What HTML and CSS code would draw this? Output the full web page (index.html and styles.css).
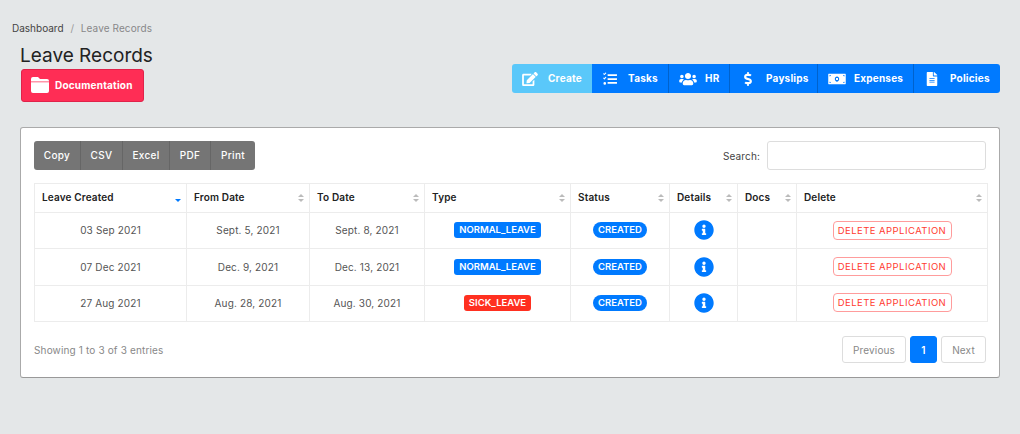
FILE: index.html
```html
<!DOCTYPE html>
<html>
  <head>
    <meta charset="utf-8" />
    <title>Leave Records</title>
    <link rel="stylesheet" href="styles.css">
  </head>
  <body>
    <nav class="crumbs">
      <a href="#">Dashboard</a>
      <span class="crumb-sep">/</span>
      <span class="crumb-here">Leave Records</span>
    </nav>

    <header class="top">
      <div class="top-left">
        <h1>Leave Records</h1>
        <a class="doc-btn" href="#">
          <svg class="doc-icon" viewBox="0 0 18 16"><path d="M2 0h5l2 2h7a2 2 0 0 1 2 2v.6H0V2a2 2 0 0 1 2-2zM0 5.3h18V14a2 2 0 0 1-2 2H2a2 2 0 0 1-2-2z"/></svg>
          Documentation
        </a>
      </div>
      <div class="nav-group">
        <a class="nav-btn nav-active nav-create" href="#">
          <svg class="nav-icon" viewBox="0 0 576 512"><path d="M402.6 83.2l90.2 90.2c3.8 3.8 3.8 10 0 13.8L274.4 405.6l-92.8 10.3c-12.4 1.4-22.9-9.1-21.5-21.5l10.3-92.8L388.8 83.2c3.8-3.8 10-3.8 13.8 0zm162-22.9l-48.8-48.8c-15.2-15.2-39.9-15.2-55.2 0l-35.4 35.4c-3.8 3.8-3.8 10 0 13.8l90.2 90.2c3.8 3.8 10 3.8 13.8 0l35.4-35.4c15.2-15.3 15.2-40 0-55.2zM384 346.2V448H64V128h229.8c3.2 0 6.2-1.3 8.5-3.5l40-40c7.6-7.6 2.2-20.5-8.5-20.5H48C21.5 64 0 85.5 0 112v352c0 26.5 21.5 48 48 48h352c26.5 0 48-21.5 48-48V306.2c0-10.7-12.9-16-20.5-8.5l-40 40c-2.2 2.3-3.5 5.3-3.5 8.5z"/></svg>
          Create
        </a>
        <a class="nav-btn nav-tasks" href="#">
          <svg class="nav-icon" viewBox="0 0 512 512"><path d="M180 80h320c6 0 12 5 12 12v40c0 7-6 12-12 12H180c-7 0-12-5-12-12V92c0-7 5-12 12-12zm0 144h320c6 0 12 5 12 12v40c0 7-6 12-12 12H180c-7 0-12-5-12-12v-40c0-7 5-12 12-12zm0 144h320c6 0 12 5 12 12v40c0 7-6 12-12 12H180c-7 0-12-5-12-12v-40c0-7 5-12 12-12zM64 368a48 48 0 1 0 0 96 48 48 0 0 0 0-96zM120 34l-16-16c-3-3-8-3-11 0L49 62 33 46c-3-3-8-3-11 0L6 62c-3 3-3 8 0 11l38 38c3 3 9 3 12 0l64-66c3-3 3-8 0-11zm0 160l-16-16c-3-3-8-3-11 0l-44 44-16-16c-3-3-8-3-11 0L6 222c-3 3-3 8 0 11l38 38c3 3 9 3 12 0l64-66c3-3 3-8 0-11z"/></svg>
          Tasks
        </a>
        <a class="nav-btn nav-hr" href="#">
          <svg class="nav-icon" viewBox="0 0 640 512"><path d="M96 224c35.3 0 64-28.7 64-64s-28.7-64-64-64-64 28.7-64 64 28.7 64 64 64zm448 0c35.3 0 64-28.7 64-64s-28.7-64-64-64-64 28.7-64 64 28.7 64 64 64zm32 32h-64c-17.6 0-33.5 7.1-45.1 18.6 40.3 22.1 68.9 62 75.1 109.4h66c17.7 0 32-14.3 32-32v-32c0-35.3-28.7-64-64-64zm-256 0c61.9 0 112-50.1 112-112S381.9 32 320 32 208 82.1 208 144s50.1 112 112 112zm76.8 32h-8.3c-20.8 10-43.9 16-68.5 16s-47.6-6-68.5-16h-8.3C179.6 288 128 339.6 128 403.2V432c0 26.5 21.5 48 48 48h288c26.5 0 48-21.5 48-48v-28.8c0-63.6-51.6-115.2-115.2-115.2zm-223.7-13.4C161.5 263.1 145.6 256 128 256H64c-35.3 0-64 28.7-64 64v32c0 17.7 14.3 32 32 32h65.9c6.3-47.4 34.9-87.3 75.2-109.4z"/></svg>
          HR
        </a>
        <a class="nav-btn nav-pay" href="#">
          <svg class="nav-icon" viewBox="0 0 288 512"><path d="M209.2 233.4l-108-31.6C88.7 198.2 80 186.5 80 173.5c0-16.3 13.2-29.5 29.5-29.5h66.3c12.2 0 24.2 3.7 34.2 10.5 6.1 4.1 14.3 3.1 19.5-2l34.8-34c7.1-6.9 6.1-18.4-1.8-24.5C238 74.8 207.4 64.1 176 64V16c0-8.8-7.2-16-16-16h-32c-8.8 0-16 7.2-16 16v48h-2.5C45.8 64-5.4 118.7.5 183.6c4.2 46.1 39.4 83.6 83.8 96.6l102.5 30c12.5 3.7 21.2 15.3 21.2 28.3 0 16.3-13.2 29.5-29.5 29.5h-66.3C100 368 88 364.3 78 357.5c-6.1-4.1-14.3-3.1-19.5 2l-34.8 34c-7.1 6.9-6.1 18.4 1.8 24.5 24.5 19.2 55.1 29.9 86.5 30v48c0 8.8 7.2 16 16 16h32c8.8 0 16-7.2 16-16v-48.2c46.6-.9 90.3-28.6 105.7-72.7 21.5-61.6-14.6-124.8-72.5-141.7z"/></svg>
          Payslips
        </a>
        <a class="nav-btn nav-exp" href="#">
          <svg class="nav-icon nav-icon-wide" viewBox="0 0 640 512"><path fill-rule="evenodd" d="M16 64h608c9 0 16 7 16 16v352c0 9-7 16-16 16H16c-9 0-16-7-16-16V80c0-9 7-16 16-16zm32 48v48c27 0 48-21 48-48H48zm0 288h48c0-27-21-48-48-48v48zm544 0v-48c-27 0-48 21-48 48h48zm0-288h-48c0 27 21 48 48 48v-48zM320 160c-44 0-80 43-80 96s36 96 80 96 80-43 80-96-36-96-80-96zm-36 60h72v72h-72v-72z"/></svg>
          Expenses
        </a>
        <a class="nav-btn nav-pol" href="#">
          <svg class="nav-icon" viewBox="0 0 384 512"><path d="M224 136V0H24C10.7 0 0 10.7 0 24v464c0 13.3 10.7 24 24 24h336c13.3 0 24-10.7 24-24V160H248c-13.2 0-24-10.8-24-24zm64 236c0 6.6-5.4 12-12 12H108c-6.6 0-12-5.4-12-12v-8c0-6.6 5.4-12 12-12h168c6.6 0 12 5.4 12 12v8zm0-64c0 6.6-5.4 12-12 12H108c-6.6 0-12-5.4-12-12v-8c0-6.6 5.4-12 12-12h168c6.6 0 12 5.4 12 12v8zm0-72v8c0 6.6-5.4 12-12 12H108c-6.6 0-12-5.4-12-12v-8c0-6.6 5.4-12 12-12h168c6.6 0 12 5.4 12 12zm96-114.1v6.1H256V0h6.1c6.4 0 12.5 2.5 17 7l97.9 98c4.5 4.5 7 10.6 7 16.9z"/></svg>
          Policies
        </a>
      </div>
    </header>

    <main class="card">
      <div class="tools">
        <div class="export-group">
          <button class="export-btn exp-copy">Copy</button>
          <button class="export-btn exp-csv">CSV</button>
          <button class="export-btn exp-excel">Excel</button>
          <button class="export-btn exp-pdf">PDF</button>
          <button class="export-btn exp-print">Print</button>
        </div>
        <label class="search">Search: <input type="text" class="search-input"></label>
      </div>

      <table class="records">
        <colgroup>
          <col class="col-created"><col class="col-from"><col class="col-to"><col class="col-type">
          <col class="col-status"><col class="col-details"><col class="col-docs"><col class="col-delete">
        </colgroup>
        <thead>
          <tr>
            <th class="sorted">Leave Created</th>
            <th>From Date</th>
            <th>To Date</th>
            <th>Type</th>
            <th>Status</th>
            <th>Details</th>
            <th>Docs</th>
            <th>Delete</th>
          </tr>
        </thead>
        <tbody>
          <tr>
            <td>03 Sep 2021</td>
            <td>Sept. 5, 2021</td>
            <td>Sept. 8, 2021</td>
            <td><span class="tag tag-blue">NORMAL_LEAVE</span></td>
            <td><span class="tag tag-pill">CREATED</span></td>
            <td><svg class="info" viewBox="0 0 512 512"><path d="M256 8C119.043 8 8 119.083 8 256c0 136.997 111.043 248 248 248s248-111.003 248-248C504 119.083 392.957 8 256 8zm0 110c23.196 0 42 18.804 42 42s-18.804 42-42 42-42-18.804-42-42 18.804-42 42-42zm56 254c0 6.627-5.373 12-12 12h-88c-6.627 0-12-5.373-12-12v-24c0-6.627 5.373-12 12-12h12v-64h-12c-6.627 0-12-5.373-12-12v-24c0-6.627 5.373-12 12-12h64c6.627 0 12 5.373 12 12v100h12c6.627 0 12 5.373 12 12v24z"/></svg></td>
            <td></td>
            <td><a class="del-btn" href="#">DELETE APPLICATION</a></td>
          </tr>
          <tr>
            <td>07 Dec 2021</td>
            <td>Dec. 9, 2021</td>
            <td>Dec. 13, 2021</td>
            <td><span class="tag tag-blue">NORMAL_LEAVE</span></td>
            <td><span class="tag tag-pill">CREATED</span></td>
            <td><svg class="info" viewBox="0 0 512 512"><path d="M256 8C119.043 8 8 119.083 8 256c0 136.997 111.043 248 248 248s248-111.003 248-248C504 119.083 392.957 8 256 8zm0 110c23.196 0 42 18.804 42 42s-18.804 42-42 42-42-18.804-42-42 18.804-42 42-42zm56 254c0 6.627-5.373 12-12 12h-88c-6.627 0-12-5.373-12-12v-24c0-6.627 5.373-12 12-12h12v-64h-12c-6.627 0-12-5.373-12-12v-24c0-6.627 5.373-12 12-12h64c6.627 0 12 5.373 12 12v100h12c6.627 0 12 5.373 12 12v24z"/></svg></td>
            <td></td>
            <td><a class="del-btn" href="#">DELETE APPLICATION</a></td>
          </tr>
          <tr>
            <td>27 Aug 2021</td>
            <td>Aug. 28, 2021</td>
            <td>Aug. 30, 2021</td>
            <td><span class="tag tag-red">SICK_LEAVE</span></td>
            <td><span class="tag tag-pill">CREATED</span></td>
            <td><svg class="info" viewBox="0 0 512 512"><path d="M256 8C119.043 8 8 119.083 8 256c0 136.997 111.043 248 248 248s248-111.003 248-248C504 119.083 392.957 8 256 8zm0 110c23.196 0 42 18.804 42 42s-18.804 42-42 42-42-18.804-42-42 18.804-42 42-42zm56 254c0 6.627-5.373 12-12 12h-88c-6.627 0-12-5.373-12-12v-24c0-6.627 5.373-12 12-12h12v-64h-12c-6.627 0-12-5.373-12-12v-24c0-6.627 5.373-12 12-12h64c6.627 0 12 5.373 12 12v100h12c6.627 0 12 5.373 12 12v24z"/></svg></td>
            <td></td>
            <td><a class="del-btn" href="#">DELETE APPLICATION</a></td>
          </tr>
        </tbody>
      </table>

      <div class="table-foot">
        <div class="entries">Showing 1 to 3 of 3 entries</div>
        <div class="pager">
          <a class="page-btn page-prev" href="#">Previous</a>
          <a class="page-btn page-on" href="#">1</a>
          <a class="page-btn page-next" href="#">Next</a>
        </div>
      </div>
    </main>
  </body>
</html>
```

FILE: styles.css
```css
* {
  box-sizing: border-box;
}
body {
  margin: 0;
  padding: 21px 20px 0 20px;
  background-color: #e4e7e8;
  color: #333;
  font: 10px Inter, 'Liberation Sans', sans-serif;
  letter-spacing: 0.15px;
}
a {
  text-decoration: none;
}

/* breadcrumb */
.crumbs {
  margin-left: -8px;
  height: 14px;
  line-height: 14px;
  letter-spacing: 0;
}
.crumbs a {
  color: #444;
}
.crumb-sep {
  margin: 0 4px;
  color: #999;
}
.crumb-here {
  color: #888;
  letter-spacing: 0.1px;
}

/* header */
.top {
  display: flex;
  justify-content: space-between;
  margin-top: 9px;
}
h1 {
  margin: 0;
  height: 24px;
  line-height: 24px;
  font-size: 19px;
  font-weight: 400;
  letter-spacing: 0;
  color: #222;
}
.doc-btn {
  display: flex;
  align-items: center;
  width: 123px;
  height: 33px;
  margin: 1px 0 0 1px;
  padding: 0 0 2px 9px;
  border: 1px solid #e0234a;
  border-radius: 3px;
  background-color: #ff2d55;
  color: #fff;
  font-weight: 700;
  letter-spacing: 0.2px;
}
.doc-icon {
  width: 18px;
  height: 16px;
  margin-right: 6px;
  fill: #fff;
}
.nav-group {
  display: flex;
  height: 29px;
  margin-top: 20px;
}
.nav-btn {
  display: flex;
  align-items: center;
  padding: 0 0 2px 10px;
  border-right: 1px solid #0062cc;
  background-color: #007aff;
  color: #fff;
  font-weight: 700;
  letter-spacing: 0.2px;
}
.nav-btn:last-child {
  border-right: 0;
  border-radius: 0 3px 3px 0;
}
.nav-active {
  background-color: #5ac8fa;
  border-right: 0;
  border-radius: 3px 0 0 3px;
}
.nav-create { width: 80px; }
.nav-tasks { width: 77px; }
.nav-hr { width: 61px; }
.nav-pay { width: 88px; }
.nav-exp { width: 96px; }
.nav-pol { width: 86px; }
.nav-icon {
  width: 16px;
  height: 14px;
  margin: 2px 10px 0 0;
  fill: #fff;
}
.nav-hr .nav-icon {
  width: 18px;
  margin-right: 8px;
}
.nav-icon-wide {
  width: 18px;
  margin-right: 8px;
}

/* card */
.card {
  margin-top: 25px;
  height: 251px;
  padding: 13px 13px 0 13px;
  background-color: #fff;
  border: 1px solid #aaa;
  border-bottom-color: #999;
  border-radius: 3px;
}
.tools {
  display: flex;
  justify-content: space-between;
  height: 29px;
}
.export-group {
  display: flex;
}
.export-btn {
  height: 29px;
  padding: 0 0 2px 0;
  border: 0;
  border-right: 1px solid #666;
  background-color: #757575;
  color: #fff;
  font: 500 10px Inter, 'Liberation Sans', sans-serif;
  letter-spacing: 0.3px;
}
.export-btn:first-child {
  border-radius: 3px 0 0 3px;
}
.export-btn:last-child {
  border-right: 0;
  border-radius: 0 3px 3px 0;
}
.exp-copy { width: 47px; }
.exp-csv { width: 42px; }
.exp-excel { width: 47px; }
.exp-pdf { width: 41px; }
.exp-print { width: 44px; }
.search {
  display: flex;
  align-items: center;
  color: #444;
}
.search-input {
  width: 219px;
  height: 29px;
  margin-left: 7px;
  border: 1px solid #ddd;
  border-radius: 3px;
  background-color: #fff;
}

/* table */
.records {
  width: 953px;
  margin-top: 13px;
  table-layout: fixed;
  border-collapse: collapse;
}
.col-created { width: 152px; }
.col-from { width: 123px; }
.col-to { width: 115px; }
.col-type { width: 146px; }
.col-status { width: 99px; }
.col-details { width: 68px; }
.col-docs { width: 59px; }
.col-delete { width: 191px; }
.records th,
.records td {
  border: 1px solid #ececec;
  padding: 0;
}
.records th {
  position: relative;
  height: 29px;
  padding: 0 0 2px 7px;
  text-align: left;
  font-weight: 600;
  letter-spacing: 0.15px;
  color: #222;
}
/* sort arrows */
.records th::before,
.records th::after {
  content: '';
  position: absolute;
  right: 5px;
  width: 0;
  height: 0;
  border-left: 3px solid transparent;
  border-right: 3px solid transparent;
}
.records th::before {
  top: 10px;
  border-bottom: 3px solid #bbb;
}
.records th::after {
  top: 15px;
  border-top: 3px solid #bbb;
}
.records th.sorted::before {
  border-bottom-color: transparent;
}
.records th.sorted::after {
  border-top-color: #007aff;
}
.records td {
  height: 36.4px;
  padding-bottom: 1px;
  text-align: center;
  color: #555;
}
.tag {
  display: inline-block;
  height: 16px;
  line-height: 16px;
  padding: 0 5px;
  color: #fff;
  font-size: 9.5px;
  font-weight: 600;
  letter-spacing: 0;
  vertical-align: middle;
}
.tag-blue {
  background-color: #007aff;
  border-radius: 3px;
}
.tag-red {
  background-color: #ff3020;
  border-radius: 3px;
}
.tag-pill {
  background-color: #007aff;
  border-radius: 8px;
}
.info {
  display: block;
  width: 20px;
  height: 20px;
  margin: 0 auto;
  fill: #007aff;
}
.del-btn {
  display: inline-block;
  width: 119px;
  height: 19px;
  line-height: 17px;
  border: 1px solid #ff9c9c;
  border-radius: 4px;
  color: #ff3b30;
  font-size: 9.5px;
  letter-spacing: 0.45px;
  vertical-align: middle;
}

/* footer */
.table-foot {
  display: flex;
  justify-content: space-between;
  align-items: center;
  width: 952px;
  margin-top: 14px;
}
.entries {
  color: #888;
}
.pager {
  display: flex;
  gap: 4px;
}
.page-btn {
  display: flex;
  align-items: center;
  justify-content: center;
  height: 27px;
  border: 1px solid #ddd;
  border-radius: 3px;
  color: #888;
}
.page-prev { width: 64px; }
.page-next { width: 45px; }
.page-on {
  width: 27px;
  background-color: #007aff;
  border-color: #007aff;
  color: #fff;
  font-weight: 600;
}
```
